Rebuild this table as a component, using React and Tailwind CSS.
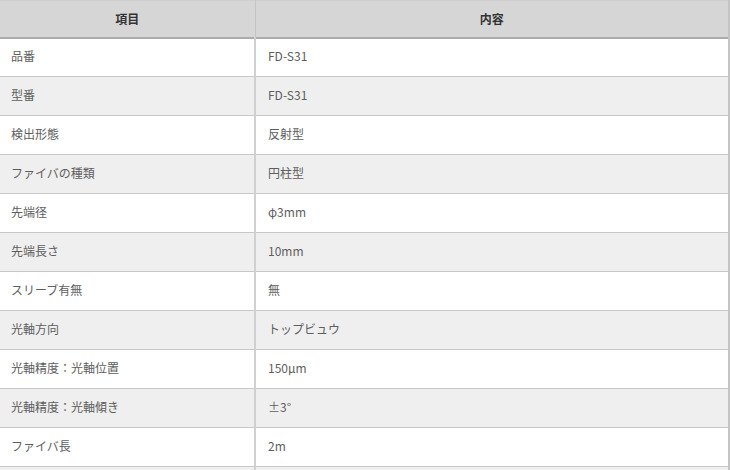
const specs = [
  ['品番', 'FD-S31'],
  ['型番', 'FD-S31'],
  ['検出形態', '反射型'],
  ['ファイバの種類', '円柱型'],
  ['先端径', 'φ3mm'],
  ['先端長さ', '10mm'],
  ['スリーブ有無', '無'],
  ['光軸方向', 'トップビュウ'],
  ['光軸精度：光軸位置', '150μm'],
  ['光軸精度：光軸傾き', '±3°'],
  ['ファイバ長', '2m'],
  ['', ''],
]

export default function App() {
  return (
    <div className="w-[730px] h-[470px] overflow-hidden bg-white font-['Noto_Sans_CJK_JP','Noto_Sans',sans-serif]">
      <table className="w-[730px] border-collapse table-fixed text-[12px]">
        <colgroup>
          <col className="w-[255px]" />
          <col />
        </colgroup>
        <thead>
          <tr className="h-[37px] bg-[#d6d6d6] border-t border-t-[#cfcfcf] border-b-2 border-b-[#ababab]">
            <th className="font-bold text-[#333] text-center border-r border-[#c4c4c4]">項目</th>
            <th className="font-bold text-[#333] text-center border-r-2 border-[#c4c4c4]">内容</th>
          </tr>
        </thead>
        <tbody>
          {specs.map(([label, value], i) => (
            <tr
              key={i}
              className={`h-[39px] border-b border-[#c8c8c8] ${i % 2 === 1 ? 'bg-[#efefef]' : 'bg-white'}`}
            >
              <td className="pl-[11px] pb-[2px] text-[#5e5e5e] border-r-2 border-[#d0d0d0]">{label}</td>
              <td className="pl-[12px] pb-[2px] text-[#5e5e5e] border-r-2 border-[#c4c4c4]">{value}</td>
            </tr>
          ))}
        </tbody>
      </table>
    </div>
  )
}
